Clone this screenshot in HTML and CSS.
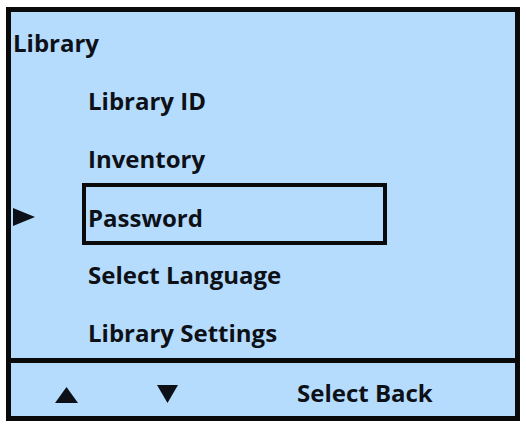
FILE: index.html
```html
<!DOCTYPE html>
<html>
<head>
<meta charset="utf-8">
<link rel="stylesheet" href="styles.css">
</head>
<body>
<div class="screen">
  <div class="menu">
    <div class="title">Library</div>
    <div class="row"><div class="marker"></div><div class="label">Library ID</div></div>
    <div class="row"><div class="marker"></div><div class="label">Inventory</div></div>
    <div class="row row-selected">
      <div class="marker">
        <svg class="pointer" width="22" height="18" viewBox="0 0 22 18"><polygon points="0,0 22,9 0,18" fill="#0d1117"/></svg>
      </div>
      <div class="label label-selected">Password</div>
    </div>
    <div class="row"><div class="marker"></div><div class="label">Select Language</div></div>
    <div class="row"><div class="marker"></div><div class="label">Library Settings</div></div>
  </div>
  <div class="footer">
    <svg class="up" width="23" height="16" viewBox="0 0 23 16"><polygon points="11.5,0 23,16 0,16" fill="#0d1117"/></svg>
    <svg class="down" width="21" height="18" viewBox="0 0 21 18"><polygon points="0,0 21,0 10.5,18" fill="#0d1117"/></svg>
    <div class="keys">Select Back</div>
  </div>
</div>
</body>
</html>
```
FILE: styles.css
```css
html, body {
  margin: 0;
  padding: 0;
  background: #ffffff;
}
body {
  padding: 7px 6px 0 6px;
  font-family: "Open Sans", "DejaVu Sans", sans-serif;
  font-weight: 700;
  font-size: 24px;
  color: #0d1117;
}
.screen {
  width: 514px;
  height: 414px;
  box-sizing: border-box;
  border: 5px solid #0a0a0a;
  background: #b5dcfd;
  display: flex;
  flex-direction: column;
}
.menu {
  height: 346px;
  padding-top: 2px;
  box-sizing: border-box;
  overflow: hidden;
  display: flex;
  flex-direction: column;
}
.title {
  height: 58px;
  line-height: 58px;
  padding-left: 2px;
  flex: none;
}
.row {
  display: flex;
  height: 58px;
  flex: none;
}
.marker {
  width: 71px;
  flex: none;
  display: flex;
  align-items: center;
}
.label {
  width: 305px;
  box-sizing: border-box;
  padding-left: 6px;
  line-height: 58px;
}
.row-selected {
  height: 62px;
  margin-top: -5px;
  margin-bottom: 1px;
}
.label-selected {
  border: 4px solid #0a0a0a;
  padding-left: 2px;
  padding-top: 8px;
  line-height: 46px;
  height: 62px;
}
.pointer {
  margin-left: 2px;
  margin-top: 5px;
}
.footer {
  border-top: 5px solid #0a0a0a;
  flex: 1;
  display: flex;
  align-items: flex-start;
  padding-left: 44px;
}
.up {
  margin-top: 24px;
}
.down {
  margin-left: 79px;
  margin-top: 22px;
}
.keys {
  margin-left: 119px;
  line-height: 33px;
  margin-top: 13px;
}
```
